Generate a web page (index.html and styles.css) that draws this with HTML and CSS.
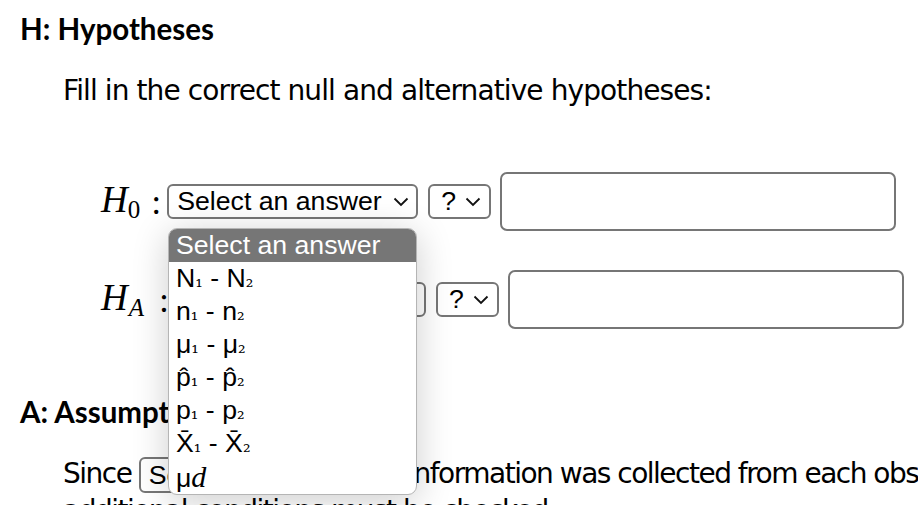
FILE: index.html
```html
<!DOCTYPE html>
<html lang="en">
<head>
<meta charset="utf-8">
<title>Hypotheses</title>
<link rel="stylesheet" href="styles.css">
</head>
<body>
<div class="page">
  <h2 class="sec-title">H: Hypotheses</h2>
  <p class="instr">Fill in the correct null and alternative hypotheses:</p>

  <div class="hyp-list">
    <div class="hyp-row">
      <span class="math">H<span class="msub">0</span></span><span class="colon">:</span>
      <div class="select select-wide"><span class="select-text">Select an answer</span><svg class="chev" viewBox="0 0 16 10" width="16" height="10"><polyline points="1.5,1.5 8,8 14.5,1.5"/></svg></div>
      <div class="select select-small"><span class="select-text">?</span><svg class="chev" viewBox="0 0 16 10" width="16" height="10"><polyline points="1.5,1.5 8,8 14.5,1.5"/></svg></div>
      <div class="textbox"></div>
    </div>
    <div class="hyp-row">
      <span class="math">H<span class="msub msub-a">A</span></span><span class="colon">:</span>
      <div class="select select-wide"><span class="select-text">Select an answer</span><svg class="chev" viewBox="0 0 16 10" width="16" height="10"><polyline points="1.5,1.5 8,8 14.5,1.5"/></svg></div>
      <div class="select select-small"><span class="select-text">?</span><svg class="chev" viewBox="0 0 16 10" width="16" height="10"><polyline points="1.5,1.5 8,8 14.5,1.5"/></svg></div>
      <div class="textbox"></div>
    </div>
  </div>

  <h2 class="sec-title sec-a">A: Assumptions</h2>
  <p class="since">Since <span class="select select-inline"><span class="select-text">Select an answer</span><svg class="chev" viewBox="0 0 16 10" width="16" height="10"><polyline points="1.5,1.5 8,8 14.5,1.5"/></svg></span> information was collected from each observation,<br>additional conditions must be checked.</p>
</div>

<div class="dropdown">
  <div class="opt opt-selected">Select an answer</div>
  <div class="opt">N<span class="sb">₁</span> - N<span class="sb">₂</span></div>
  <div class="opt">n<span class="sb">₁</span> - n<span class="sb">₂</span></div>
  <div class="opt">μ<span class="sb">₁</span> - μ<span class="sb">₂</span></div>
  <div class="opt">p̂<span class="sb">₁</span> - p̂<span class="sb">₂</span></div>
  <div class="opt">p<span class="sb">₁</span> - p<span class="sb">₂</span></div>
  <div class="opt">X̄<span class="sb">₁</span> - X̄<span class="sb">₂</span></div>
  <div class="opt">μ<span class="md">d</span></div>
</div>
</body>
</html>
```
FILE: styles.css
```css
html, body {
  margin: 0;
  padding: 0;
  background: #fff;
}
body {
  position: relative;
  width: 918px;
  height: 505px;
  overflow: hidden;
  font-family: "DejaVu Sans", Verdana, sans-serif;
  font-size: 28px;
  letter-spacing: -0.9px;
  color: #000;
}
.page {
  padding: 12px 0 0 20px;
}
.sec-title {
  margin: 0;
  font-family: Lato, "DejaVu Sans", sans-serif;
  font-size: 29.5px;
  font-weight: 700;
  letter-spacing: 0;
  line-height: 34px;
}
.instr {
  margin: 28px 0 0 43px;
  line-height: 34px;
}
.hyp-list {
  margin: 64px 0 0 81px;
  display: flex;
  flex-direction: column;
  gap: 39px;
}
.hyp-row {
  display: flex;
  align-items: center;
  height: 59px;
  letter-spacing: 0;
}
.math {
  font-family: "Liberation Serif", "DejaVu Serif", serif;
  font-style: italic;
  font-size: 37px;
  line-height: 1;
}
.msub {
  font-style: normal;
  font-size: 25px;
  vertical-align: -6px;
}
.msub-a {
  font-style: italic;
  margin-left: 1px;
  margin-right: 4px;
}
.colon {
  font-family: "Liberation Serif", "DejaVu Serif", serif;
  font-size: 36px;
  line-height: 1;
  margin-left: 11px;
}
.select {
  box-sizing: border-box;
  display: flex;
  align-items: center;
  justify-content: space-between;
  height: 35px;
  border: 2px solid #767676;
  border-radius: 6px;
  background: #fff;
  font-family: "Liberation Sans", Arial, sans-serif;
  font-size: 26.67px;
  letter-spacing: 0;
  color: #000;
}
.hyp-row .select-wide {
  margin-left: 6px;
}
.select-wide {
  width: 251px;
  padding: 0 7px 0 8px;
}
.select-small {
  width: 63px;
  margin-left: 10px;
  padding: 0 8px 0 11px;
}
.chev {
  width: 16px;
  height: 10px;
  fill: none;
  stroke: #111;
  stroke-width: 1.8;
}
.textbox {
  box-sizing: border-box;
  width: 396px;
  height: 59px;
  margin-left: 9px;
  border: 2px solid #767676;
  border-radius: 7px;
  background: #fff;
}
.sec-a {
  margin-top: 66px;
}
.since {
  margin: 27px 0 0 43px;
  width: 1300px;
  line-height: 36px;
  letter-spacing: -1.5px;
}
.select-inline {
  display: inline-flex;
  vertical-align: middle;
  width: 261px;
  height: 36px;
  padding: 0 7px 0 8px;
}
.dropdown {
  position: absolute;
  left: 168px;
  top: 228px;
  width: 249px;
  height: 267px;
  box-sizing: border-box;
  border: 1px solid #b5b5b5;
  border-radius: 9px;
  background: #fff;
  overflow: hidden;
  box-shadow: 0 6px 36px rgba(0, 0, 0, 0.2);
  font-family: "Liberation Sans", Arial, sans-serif;
  font-size: 26.67px;
  letter-spacing: 0;
}
.opt {
  height: 33px;
  line-height: 33px;
  padding-left: 7px;
  white-space: nowrap;
}
.opt-selected {
  background: #767676;
  color: #fff;
}
.sb {
  font-family: "DejaVu Serif", serif;
  font-size: 19px;
}
.md {
  font-family: "Liberation Serif", serif;
  font-style: italic;
  font-size: 30px;
}
```
